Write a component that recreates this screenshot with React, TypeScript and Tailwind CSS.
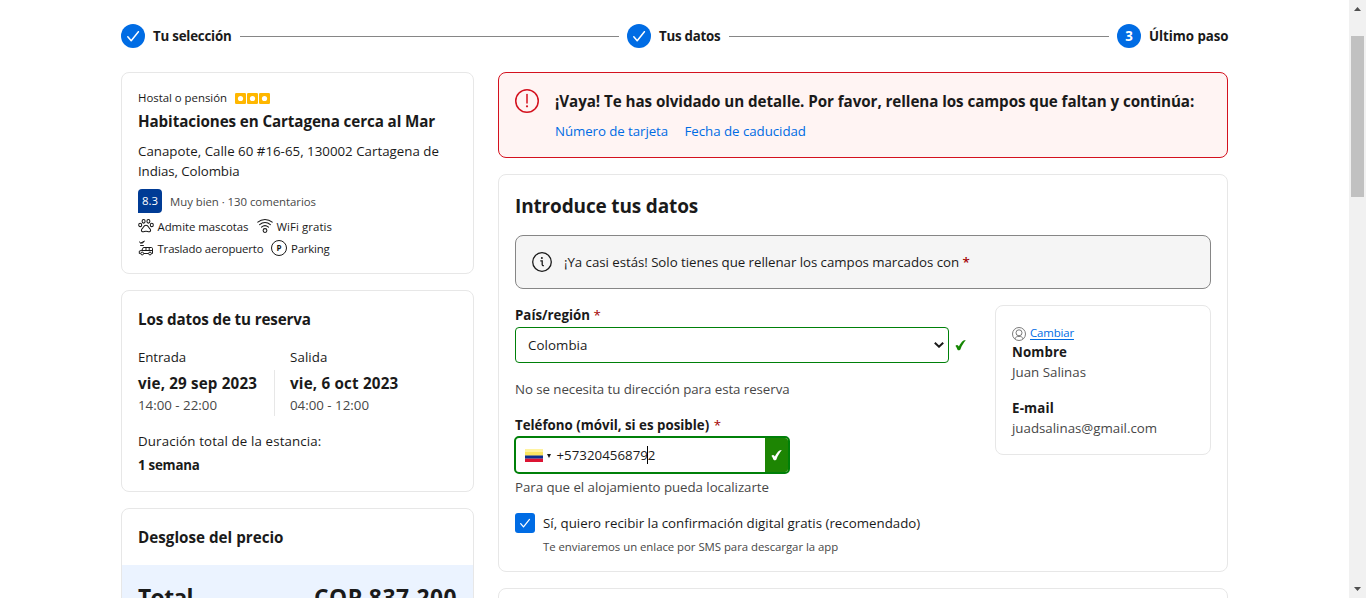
import type { ReactNode } from "react";

const strong = "text-[13.3px] font-bold whitespace-nowrap";
const body = "text-[13.3px] whitespace-nowrap";
const small = "text-[11.4px] whitespace-nowrap";
const heading = "text-[15.2px] font-bold whitespace-nowrap";

function CheckIcon({ className = "" }: { className?: string }) {
  return (
    <svg viewBox="0 0 24 24" className={className} fill="none" stroke="currentColor" strokeWidth="1.5" strokeLinecap="round" strokeLinejoin="round">
      <path d="M6.8 12.8l3.4 3.9 7.2-9" />
    </svg>
  );
}

function HeavyCheck({ className = "" }: { className?: string }) {
  return (
    <svg viewBox="0 0 12 12" className={className} fill="currentColor">
      <path d="M.4 6.500C1.300 5.200 2.700 5 3.400 6l.8 1.200C5.500 4.600 7.100 2.300 8.900.9c.9-.6 1.900-.6 2.900-.5C9.500 3 7.600 6 6.100 9.700c-.5 1.100-1 1.500-2 1.500-1.100 0-1.400-.4-1.700-1.400L1.500 7.900C1.300 7.200 1 6.700.4 6.500z" />
    </svg>
  );
}

function Step({ label, marker }: { label: ReactNode; marker: ReactNode }) {
  return (
    <div className="flex items-center gap-2">
      <span className="flex size-6 items-center justify-center rounded-full bg-[#006ce4] text-[13.3px] font-bold text-white">{marker}</span>
      {label}
    </div>
  );
}

function Card({ className = "", children }: { className?: string; children?: ReactNode }) {
  return <section className={"rounded-lg border border-[#e7e7e7] bg-white " + className}>{children}</section>;
}

function BadgeSquare() {
  return (
    <svg viewBox="0 0 11 11" className="size-[11px]">
      <rect width="11" height="11" rx="1.2" fill="#ffb700" />
      <circle cx="5.500" cy="5.500" r="2.600" fill="#fff" />
    </svg>
  );
}

function PawIcon() {
  return (
    <svg viewBox="0 0 16 16" className="size-4" fill="none" stroke="currentColor" strokeWidth="1.050">
      <ellipse cx="5.600" cy="3.300" rx="1.500" ry="1.800" />
      <ellipse cx="10.400" cy="3.300" rx="1.500" ry="1.800" />
      <ellipse cx="2.200" cy="6.900" rx="1.500" ry="1.700" />
      <ellipse cx="13.800" cy="6.900" rx="1.500" ry="1.700" />
      <path d="M8 7.300c-1.400 0-2.200 1-2.900 2.200-.6.900-1.700 1.500-1.700 2.700 0 1.100.9 1.800 2 1.600.9-.2 1.600-.6 2.600-.6s1.700.4 2.600.6c1.100.2 2-.5 2-1.600 0-1.200-1.100-1.800-1.700-2.700C10.200 8.300 9.400 7.300 8 7.300z" />
    </svg>
  );
}

function WifiIcon() {
  return (
    <svg viewBox="0 0 16 16" className="size-4" fill="none" stroke="currentColor" strokeWidth="1.050" strokeLinecap="round">
      <path d="M.8 4.200C5 .6 11 .6 15.200 4.200" />
      <path d="M2.600 6.700c3.200-2.800 7.600-2.800 10.800 0" />
      <path d="M4.500 9.100c2.100-1.800 4.900-1.800 7 0" />
      <circle cx="8" cy="12.500" r="1.900" />
    </svg>
  );
}

function ShuttleIcon() {
  return (
    <svg viewBox="0 0 16 16" className="size-4" fill="none" stroke="currentColor" strokeWidth="1">
      <path d="M1 1.200l1.700 1.700L7 .9 4.600 3.600H2.400z" fill="currentColor" stroke="none" />
      <path d="M1.300 1.800l1.500 1.200L6.600 1" />
      <path d="M2.200 5.500h3.600" />
      <path d="M2.600 13.500H1.300v-2.400l2.700-.9 1.200-2.700h8.200c.7 0 1.100.4 1.100 1.100v4.900h-.9M5.800 13.500h4.700" />
      <path d="M3.900 10.500h10.600M8 7.500v3M11.200 7.500v3" />
      <circle cx="4.200" cy="13.500" r="1.400" />
      <circle cx="12" cy="13.500" r="1.400" />
    </svg>
  );
}

function ParkingIcon() {
  return (
    <span className="flex size-4 items-center justify-center rounded-full border border-[#1a1a1a] text-[8px] leading-none font-bold">P</span>
  );
}

function PersonIcon() {
  return (
    <svg viewBox="0 0 14 14" className="size-[14px]" fill="none" stroke="#6b6b6b" strokeWidth=".9">
      <circle cx="7" cy="7" r="6.500" />
      <circle cx="7" cy="5.800" r="3" />
      <path d="M2.900 11.900c.4-1.700 2-2.500 4.100-2.500s3.700.8 4.100 2.500" />
    </svg>
  );
}

function SearchSummary() {
  return (
    <Card className="h-[202px] px-4 pt-[15px]">
      <div className="flex h-5 items-center gap-2">
        <span className={small + " tracking-[-0.01px]"}>Hostal o pensión</span>
        <span className="flex gap-px">
          <BadgeSquare />
          <BadgeSquare />
          <BadgeSquare />
        </span>
      </div>
      <h2 className={heading + " mt-px leading-6 tracking-[-0.1px]"}>Habitaciones en Cartagena cerca al Mar</h2>
      <p className={body + " mt-2 leading-5"}>
        <span className="tracking-[0.01px]">Canapote, Calle 60 #16-65, 130002 Cartagena de</span>
        <br />
        <span className="tracking-[-0.09px]">Indias, Colombia</span>
      </p>
      <div className="mt-2 flex h-6 items-center gap-2">
        <span className="flex size-6 items-center justify-center rounded-t-[4px] rounded-br-[4px] bg-[#003b95] text-[11.4px] font-medium text-white">8.3</span>
        <span className={small + " pt-px tracking-[-0.04px] text-[#474747]"}>Muy bien · 130 comentarios</span>
      </div>
      <div className="mt-[3px] flex h-[22px] items-center">
        <span className="-mt-0.5"><PawIcon /></span>
        <span className={small + " ml-[3.5px] w-[91px] tracking-[-0.03px]"}>Admite mascotas</span>
        <span className="-mt-0.5 ml-2"><WifiIcon /></span>
        <span className={small + " ml-1 tracking-[0.08px]"}>WiFi gratis</span>
      </div>
      <div className="flex h-[22px] items-center">
        <span className="-mt-[3px]"><ShuttleIcon /></span>
        <span className={small + " ml-[3.5px] w-[106px] tracking-[-0.15px]"}>Traslado aeropuerto</span>
        <span className="-mt-[3px] ml-[7.5px]"><ParkingIcon /></span>
        <span className={small + " ml-1 tracking-[-0.2px]"}>Parking</span>
      </div>
    </Card>
  );
}

function BookingDetails() {
  return (
    <Card className="mt-4 h-[202px] px-4 pt-4">
      <h2 className={heading + " leading-6 tracking-[-0.13px]"}>Los datos de tu reserva</h2>
      <div className="mt-4 flex">
        <div className="w-[152px]">
          <p className={body + " leading-5 font-medium tracking-[-0.09px]"}>Entrada</p>
          <div className="mt-[3px] h-[46px] w-[137px] border-r border-[#e7e7e7] pt-px">
            <p className={heading + " leading-6 tracking-[0.15px]"}>vie, 29 sep 2023</p>
            <p className={body + " leading-5 text-[#474747]"}>14:00 - 22:00</p>
          </div>
        </div>
        <div>
          <p className={body + " leading-5 font-medium tracking-[0.1px]"}>Salida</p>
          <p className={heading + " mt-1 leading-6 tracking-[0.19px]"}>vie, 6 oct 2023</p>
          <p className={body + " leading-5 text-[#474747]"}>04:00 - 12:00</p>
        </div>
      </div>
      <p className={body + " mt-[15px] leading-5 font-medium tracking-[0.13px]"}>Duración total de la estancia:</p>
      <p className={strong + " mt-1 leading-5 tracking-[-0.24px]"}>1 semana</p>
    </Card>
  );
}

function PriceSummary() {
  return (
    <Card className="mt-4 h-[160px] overflow-hidden">
      <h2 className={heading + " px-4 pt-4 leading-6 tracking-[0.01px]"}>Desglose del precio</h2>
      <div className="mt-4 flex h-[120px] items-start justify-between bg-[#ebf3ff] px-4 pt-[17px] text-[22.8px] leading-8 font-bold">
        <span className="tracking-[-0.59px]">Total</span>
        <span className="tracking-[0.49px]">COP 837.200</span>
      </div>
    </Card>
  );
}

function MissingFieldsAlert() {
  return (
    <div className="flex h-[86px] rounded-lg border border-[#d4111e] bg-[#fff4f3] px-4 pt-4">
      <svg viewBox="0 0 24 24" className="size-6" fill="none" stroke="#d4111e" strokeWidth="1.500">
        <circle cx="12" cy="12" r="11.250" />
        <path d="M12 5.500v8.500" strokeLinecap="round" />
        <circle cx="12" cy="17.300" r="1.100" fill="#d4111e" stroke="none" />
      </svg>
      <div className="ml-4">
        <h2 className={heading + " leading-6 tracking-[-0.07px]"}>¡Vaya! Te has olvidado un detalle. Por favor, rellena los campos que faltan y continúa:</h2>
        <div className={body + " mt-2 flex gap-4 leading-5 text-[#006ce4]"}>
          <a className="w-[113.500px] tracking-[-0.08px]">Número de tarjeta</a>
          <a className="tracking-[-0.04px]">Fecha de caducidad</a>
        </div>
      </div>
    </div>
  );
}

function GuestForm() {
  return (
    <Card className="mt-4 h-[398px] px-4 pt-[17px]">
      <h1 className="text-[19px] leading-7 font-bold tracking-[-0.15px]">Introduce tus datos</h1>
      <div className="mt-[15px] flex h-[54px] items-center rounded-lg border border-[#868686] bg-[#f5f5f5] pl-4">
        <svg viewBox="0 0 20 20" className="size-5" fill="none" stroke="#1a1a1a" strokeWidth="1.300">
          <circle cx="10" cy="10" r="9.300" />
          <path d="M8.300 8.900h1.900v3.700c0 .8.600 1.200 1.700 1" />
          <circle cx="9.900" cy="6" r="1" fill="#1a1a1a" stroke="none" />
        </svg>
        <p className={body + " ml-3 pt-0.5 tracking-[-0.05px]"}>
          ¡Ya casi estás! Solo tienes que rellenar los campos marcados con <span className="font-semibold text-[#a30000]">*</span>
        </p>
      </div>
      <div className="mt-4 flex justify-between">
        <div>
          <label className={strong + " block leading-5"}>
            País/región <span className="font-medium text-[#a30000]">*</span>
          </label>
          <div className="mt-0.5 flex items-center gap-1.5">
            <div className="flex h-9 w-[434px] items-center justify-between rounded-[4px] border border-[#008009] pr-1 pl-3">
              <span className={body + " pt-0.5 tracking-[0.07px]"}>Colombia</span>
              <svg viewBox="0 0 10 6" className="h-[6px] w-[10px]" fill="none" stroke="#1a1a1a" strokeWidth="2">
                <path d="M.8.8L5 4.700 9.200.8" />
              </svg>
            </div>
            <HeavyCheck className="size-[11px] text-[#148602]" />
          </div>
          <p className={body + " mt-4 leading-5 tracking-[-0.06px] text-[#474747]"}>No se necesita tu dirección para esta reserva</p>
          <label className={strong + " mt-4 block leading-5"}>
            Teléfono (móvil, si es posible) <span className="ml-px font-medium text-[#a30000]">*</span>
          </label>
          <div className="mt-px -ml-px flex h-[38px] w-[276px] overflow-hidden rounded-[5px] border-2 border-[#008009]">
            <div className="flex flex-1 items-center pl-[9px]">
              <svg viewBox="0 0 18 13" className="h-[13px] w-[18px]">
                <rect width="18" height="3" fill="#fff3a0" />
                <rect y="3" width="18" height="3.800" fill="#fbe560" />
                <rect y="6.500" width="18" height="3.200" fill="#0b2f8f" />
                <rect y="9.700" width="18" height="3.300" fill="#dc1433" />
              </svg>
              <svg viewBox="0 0 5 4" className="mt-0.5 ml-1 h-1 w-1" fill="#1a1a1a" preserveAspectRatio="none">
                <path d="M0 0h5L2.500 4z" />
              </svg>
              <span className={body + " ml-[5.500px] inline-flex items-center pt-0.5 tracking-[0.01px]"}>
                +57320456879
                <span className="-mx-[0.5px] -mt-0.5 h-[18px] w-px bg-black" />
                2
              </span>
            </div>
            <div className="flex w-[23px] items-center justify-center bg-[#1d8503]">
              <HeavyCheck className="size-[11px] text-white" />
            </div>
          </div>
          <p className={body + " mt-[3px] leading-5 tracking-[-0.05px] text-[#474747]"}>Para que el alojamiento pueda localizarte</p>
          <div className="mt-4 flex items-center gap-2">
            <span className="flex size-5 items-center justify-center rounded-[3px] bg-[#006ce4] text-white">
              <CheckIcon className="size-6" />
            </span>
            <span className={body + " leading-5"}>Sí, quiero recibir la confirmación digital gratis (recomendado)</span>
          </div>
          <p className={small + " mt-1 ml-7 leading-5 tracking-[-0.04px] text-[#474747]"}>Te enviaremos un enlace por SMS para descargar la app</p>
        </div>
        <Card className="h-[150px] w-[216px] px-4 pt-[18px]">
          <div className="flex h-[18px] items-center gap-1">
            <span className="pt-0.5"><PersonIcon /></span>
            <a className={small + " tracking-[-0.13px] text-[#006ce4] underline underline-offset-2"}>Cambiar</a>
          </div>
          <p className={strong + " leading-5 tracking-[0.1px]"}>Nombre</p>
          <p className={body + " leading-5 text-[#474747]"}>Juan Salinas</p>
          <p className={strong + " mt-4 leading-5 tracking-[0.18px]"}>E-mail</p>
          <p className={body + " leading-5 text-[#474747]"}>juadsalinas@gmail.com</p>
        </Card>
      </div>
    </Card>
  );
}

function Scrollbar() {
  return (
    <div className="flex w-[17px] flex-col items-center bg-[#f1f1f1]">
      <svg viewBox="0 0 17 17" className="size-[17px]" fill="#505050"><path d="M5 11h7L8.500 7z" /></svg>
      <div className="mt-[19px] h-[161px] w-[13px] bg-[#c1c1c1]" />
      <svg viewBox="0 0 17 17" className="mt-auto size-[17px]" fill="#505050"><path d="M5 6h7l-3.500 4z" /></svg>
    </div>
  );
}

export default function App() {
  return (
    <div className="flex h-[598px] w-[1366px] overflow-hidden bg-white font-['Open_Sans','Noto_Sans',sans-serif] text-[#1a1a1a]">
      <div className="flex-1 pt-6 pr-[121px] pl-[121px]">
        <div className="flex h-6 items-center gap-2">
          <Step marker={<CheckIcon className="size-6" />} label={<span className={strong + " w-[79px] pt-0.5 tracking-[-0.21px]"}>Tu selección</span>} />
          <span className="h-px w-[379px] bg-[#868686]" />
          <Step marker={<CheckIcon className="size-6" />} label={<span className={strong + " w-[62px] pt-0.5 tracking-[-0.23px]"}>Tus datos</span>} />
          <span className="h-px flex-1 bg-[#868686]" />
          <Step marker={<span className="pt-0.5">3</span>} label={<span className={strong + " w-[79px] pt-0.5 tracking-[-0.04px]"}>Último paso</span>} />
        </div>
        <div className="mt-6 flex gap-6">
          <aside className="w-[353px]">
            <SearchSummary />
            <BookingDetails />
            <PriceSummary />
          </aside>
          <main className="w-[730px]">
            <MissingFieldsAlert />
            <GuestForm />
            <Card className="mt-4 h-[60px]" />
          </main>
        </div>
      </div>
      <Scrollbar />
    </div>
  );
}
